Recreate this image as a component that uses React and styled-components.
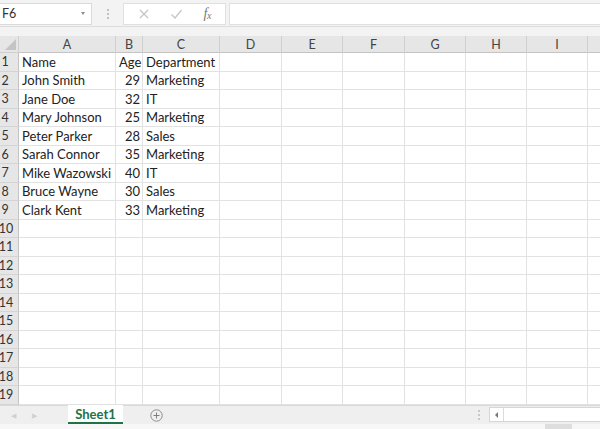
import React from 'react'
import styled, { createGlobalStyle } from 'styled-components'

const GlobalStyle = createGlobalStyle`
  html, body {
    margin: 0;
    padding: 0;
    background: #ffffff;
  }
  body {
    font-family: Lato, "Open Sans", "Liberation Sans", sans-serif;
    overflow: hidden;
  }
  *, *::before, *::after {
    box-sizing: border-box;
  }
`

// last column is only partly on screen, so it has no visible label
const columns = ['A', 'B', 'C', 'D', 'E', 'F', 'G', 'H', 'I', '']
const widths = [97, 27, 77, 62, 61, 62, 61, 61, 61, 61]

const data = [
  ['Name', 'Age', 'Department'],
  ['John Smith', 29, 'Marketing'],
  ['Jane Doe', 32, 'IT'],
  ['Mary Johnson', 25, 'Marketing'],
  ['Peter Parker', 28, 'Sales'],
  ['Sarah Connor', 35, 'Marketing'],
  ['Mike Wazowski', 40, 'IT'],
  ['Bruce Wayne', 30, 'Sales'],
  ['Clark Kent', 33, 'Marketing'],
]

const Page = styled.div`
  width: 600px;
  height: 429px;
  display: flex;
  flex-direction: column;
  background: #f3f3f3;
  overflow: hidden;
`

const FormulaBar = styled.div`
  height: 27px;
  display: flex;
  align-items: center;
  padding-top: 1px;
  border-bottom: 1px solid #dcdcdc;
  background: #f3f3f3;
`

const NameBox = styled.div`
  width: 92px;
  height: 22px;
  background: #fff;
  border: 1px solid #dadada;
  border-left: none;
  display: flex;
  align-items: center;
  justify-content: space-between;
  padding: 0 6px 0 2px;
  font-size: 12.5px;
  color: #333;
`

const Caret = styled.span`
  width: 0;
  height: 0;
  border-left: 2.5px solid transparent;
  border-right: 2.5px solid transparent;
  border-top: 3px solid #8a8a8a;
`

const Grip = styled.div`
  width: 31px;
  display: flex;
  flex-direction: column;
  align-items: center;
  gap: 2px;
  span {
    width: 2px;
    height: 2px;
    background: #c2c2c2;
  }
`

const FxBox = styled.div`
  width: 103px;
  height: 22px;
  background: #fff;
  border: 1px solid #e0e0e0;
  display: flex;
  align-items: center;
  justify-content: space-around;
  padding: 0 4px;
`

const FxLabel = styled.span`
  font-family: "Liberation Serif", serif;
  font-style: italic;
  font-size: 14px;
  color: #777;
  letter-spacing: -0.5px;
  sub {
    font-size: 10px;
    vertical-align: -1px;
  }
`

const FormulaInput = styled.div`
  flex: 1;
  height: 22px;
  margin-left: 3px;
  background: #fff;
  border: 1px solid #e0e0e0;
  border-right: none;
`

const Gap = styled.div`
  height: 9px;
  background: #f3f3f3;
`

const Grid = styled.div`
  display: grid;
  grid-template-columns: 19px ${widths.map((w) => `${w}px`).join(' ')};
  grid-template-rows: 17px repeat(19, 18.5px);
  height: 369px;
  overflow: hidden;
  background: #fff;
`

const Corner = styled.div`
  background: #e6e6e6;
  border-right: 1px solid #cfcfcf;
  border-bottom: 1px solid #cfcfcf;
  position: relative;
  &::after {
    content: '';
    position: absolute;
    right: 2px;
    bottom: 2px;
    width: 0;
    height: 0;
    border-left: 11px solid transparent;
    border-bottom: 11px solid #c4c4c4;
  }
`

const ColHeader = styled.div`
  background: #e6e6e6;
  border-right: 1px solid #cfcfcf;
  border-bottom: 1px solid #c4c4c4;
  display: flex;
  align-items: center;
  justify-content: center;
  font-size: 12.5px;
  color: #444;
`

const RowHeader = styled.div`
  background: #e6e6e6;
  border-right: 1px solid #c4c4c4;
  border-bottom: 1px solid #d4d4d4;
  display: flex;
  align-items: center;
  justify-content: center;
  padding-right: ${(p) => (p.$wide ? '6px' : '8px')};
  font-size: 12.5px;
  color: #333;
`

const Cell = styled.div`
  border-right: 1px solid #e2e2e2;
  border-bottom: 1px solid #e2e2e2;
  display: flex;
  align-items: center;
  justify-content: ${(p) => (p.$number ? 'flex-end' : 'flex-start')};
  padding: 0 2px 0 3px;
  font-size: 13px;
  color: #222;
  white-space: nowrap;
  z-index: 1;
`

const TabBar = styled.div`
  height: 19px;
  display: flex;
  align-items: stretch;
  background: #efefef;
  border-top: 1px solid #d9d9d9;
`

const NavArrows = styled.div`
  width: 68px;
  display: flex;
  align-items: center;
  padding-left: 11px;
  gap: 16px;
  color: #d0d0d0;
  font-size: 7px;
`

const SheetTab = styled.div`
  width: 55px;
  background: #fff;
  border-bottom: 2px solid #217346;
  display: flex;
  align-items: center;
  justify-content: center;
  font-size: 13px;
  font-weight: 700;
  color: #217346;
  margin-top: -1px;
`

const AddSheet = styled.div`
  width: 66px;
  display: flex;
  align-items: center;
  justify-content: center;
`

const Spacer = styled.div`
  flex: 1;
`

const ScrollGrip = styled(Grip)`
  width: 20px;
  justify-content: center;
  span {
    background: #c8c8c8;
  }
`

const HScroll = styled.div`
  width: 111px;
  margin: 1px 0 2px;
  background: #fff;
  border: 1px solid #d6d6d6;
  border-right: none;
  display: flex;
  align-items: center;
`

const ScrollArrow = styled.div`
  width: 14px;
  height: 100%;
  border-right: 1px solid #dcdcdc;
  display: flex;
  align-items: center;
  justify-content: center;
  &::before {
    content: '';
    border-top: 3px solid transparent;
    border-bottom: 3px solid transparent;
    border-right: 3px solid #777;
  }
`

const StatusStrip = styled.div`
  flex: 1;
  background: #f7f7f7;
  display: flex;
  justify-content: flex-end;
  padding-right: 28px;
  span {
    width: 27px;
    background: #dedede;
  }
`

const X = () => (
  <svg width="12" height="12" viewBox="0 0 12 12">
    <path d="M2 2 L10 10 M10 2 L2 10" stroke="#c4c4c4" strokeWidth="1.2" fill="none" />
  </svg>
)

const Check = () => (
  <svg width="13" height="12" viewBox="0 0 13 12">
    <path d="M1.5 6.5 L5 10 L11.5 2" stroke="#c4c4c4" strokeWidth="1.2" fill="none" />
  </svg>
)

const Plus = () => (
  <svg width="13" height="13" viewBox="0 0 13 13">
    <circle cx="6.5" cy="6.5" r="5.7" stroke="#8d8d8d" strokeWidth="1" fill="none" />
    <path d="M6.5 3.5 V9.5 M3.5 6.5 H9.5" stroke="#7d7d7d" strokeWidth="1" />
  </svg>
)

const App = () => {
  const rows = Array.from({ length: 19 }, (_, i) => i + 1)
  return (
    <>
      <GlobalStyle />
      <Page>
        <FormulaBar>
          <NameBox>
            F6
            <Caret />
          </NameBox>
          <Grip>
            <span />
            <span />
            <span />
          </Grip>
          <FxBox>
            <X />
            <Check />
            <FxLabel>
              f<sub>x</sub>
            </FxLabel>
          </FxBox>
          <FormulaInput />
        </FormulaBar>
        <Gap />
        <Grid>
          <Corner />
          {columns.map((c, ci) => (
            <ColHeader key={ci}>{c}</ColHeader>
          ))}
          {rows.map((r) => (
            <React.Fragment key={r}>
              <RowHeader $wide={r > 9}>{r}</RowHeader>
              {columns.map((c, ci) => {
                const value = data[r - 1] ? data[r - 1][ci] : undefined
                return (
                  <Cell key={ci} $number={typeof value === 'number'}>
                    {value}
                  </Cell>
                )
              })}
            </React.Fragment>
          ))}
        </Grid>
        <TabBar>
          <NavArrows>
            <span>◀</span>
            <span>▶</span>
          </NavArrows>
          <SheetTab>Sheet1</SheetTab>
          <AddSheet>
            <Plus />
          </AddSheet>
          <Spacer />
          <ScrollGrip>
            <span />
            <span />
            <span />
          </ScrollGrip>
          <HScroll>
            <ScrollArrow />
          </HScroll>
        </TabBar>
        <StatusStrip>
          <span />
        </StatusStrip>
      </Page>
    </>
  )
}

export default App
